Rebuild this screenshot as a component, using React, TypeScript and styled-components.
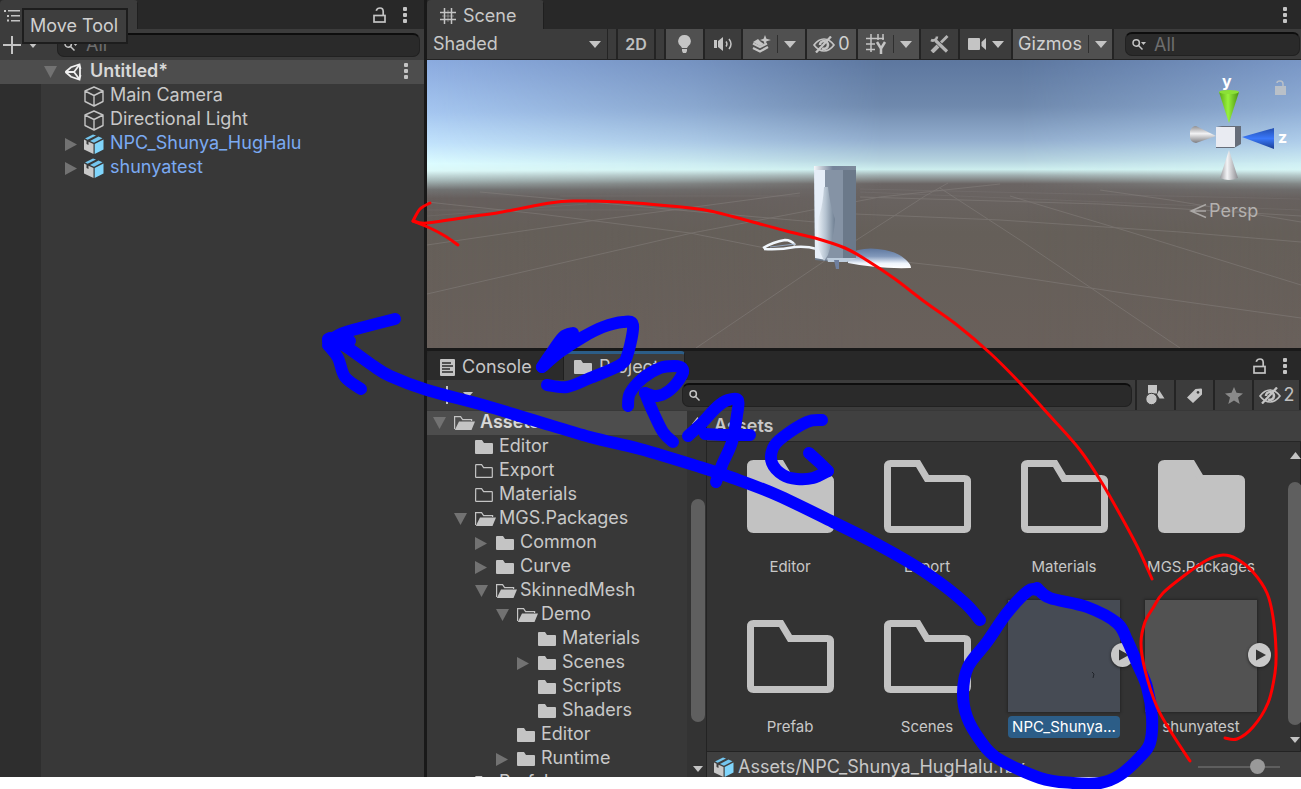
import React from "react";
import styled, { createGlobalStyle, css } from "styled-components";

const GlobalStyle = createGlobalStyle`
  *, *::before, *::after { box-sizing: border-box; }
  html, body { margin: 0; padding: 0; background: #ffffff; }
  body {
    font-family: Inter, "Liberation Sans", sans-serif;
    font-size: 18px;
    line-height: 24px;
    color: #c8c8c8;
    overflow: hidden;
  }
  button, input, select { font: inherit; color: inherit; }
  svg { display: block; flex: none; }
`;

/* ---------- layout ---------- */

const Page = styled.div`
  position: relative;
  height: 100vh;
  padding-bottom: 12px;
`;

const Editor = styled.main`
  height: 100%;
  display: grid;
  grid-template-columns: minmax(0, 424fr) minmax(0, 874fr);
  gap: 3px;
  background: #191919;
`;

const RightSide = styled.div`
  display: grid;
  grid-template-rows: minmax(0, 348fr) minmax(0, 426fr);
  gap: 3px;
  min-height: 0;
`;

const Panel = styled.section`
  display: flex;
  flex-direction: column;
  min-width: 0;
  min-height: 0;
  overflow: hidden;
  background: #383838;
`;

const TabBar = styled.div`
  display: flex;
  flex: none;
  height: 29px;
  background: #282828;
`;

const Tab = styled.button<{ $active?: boolean; $focused?: boolean; $width: number; $pad: number }>`
  display: flex;
  align-items: center;
  gap: 7px;
  width: ${(p) => p.$width}px;
  padding: 0 0 0 ${(p) => p.$pad}px;
  border: 0;
  border-right: 1px solid #1f1f1f;
  border-top: 3px solid ${(p) => (p.$focused ? "#2c5d87" : "transparent")};
  border-radius: 4px 4px 0 0;
  background: ${(p) => (p.$active ? "#3c3c3c" : "#2b2b2b")};
  white-space: nowrap;
`;

const TabTools = styled.div<{ $right: number }>`
  display: flex;
  align-items: center;
  gap: 4px;
  margin-left: auto;
  padding-right: ${(p) => p.$right}px;
`;

const IconButton = styled.button`
  display: grid;
  place-items: center;
  width: 22px;
  height: 22px;
  padding: 0;
  border: 0;
  background: none;
`;

const Toolbar = styled.div`
  display: flex;
  flex: none;
  height: 31px;
  background: #3c3c3c;
  border-bottom: 1px solid #232323;
`;

/* ---------- search ---------- */

const SearchBox = styled.label`
  display: flex;
  align-items: center;
  gap: 8px;
  flex: 1;
  min-width: 0;
  height: 24px;
  padding-left: 6px;
  background: #2a2a2a;
  border: 1px solid #212121;
  border-top: 2px solid #0d0d0d;
  border-radius: 7px;
`;

const SearchInput = styled.input`
  flex: 1;
  min-width: 0;
  padding: 0;
  border: 0;
  outline: 0;
  background: none;
  &::placeholder { color: #6e6e6e; opacity: 1; }
`;

/* ---------- hierarchy ---------- */

const HierarchyTools = styled(Toolbar)`
  align-items: center;
  padding: 0 4px 0 3px;
  border-bottom: 0;
`;

const AddButton = styled.button`
  display: flex;
  align-items: center;
  gap: 7px;
  width: 54px;
  padding: 0;
  border: 0;
  background: none;
`;

const HierarchyBody = styled.div`
  flex: 1;
  background: linear-gradient(to right, #2e2e2e 41px, #383838 41px);
`;

const Row = styled.div<{ $level: number; $start: number; $head?: boolean; $prefab?: boolean }>`
  display: flex;
  align-items: center;
  height: 24px;
  padding-bottom: 2px;
  padding-left: ${(p) => p.$start + p.$level * 21}px;
  padding-right: 7px;
  white-space: nowrap;
  color: ${(p) => (p.$prefab ? "#7baaf2" : "#c8c8c8")};
  ${(p) =>
    p.$head &&
    css`
      background: #4d4d4d;
      font-weight: 600;
      color: #d8d8d8;
    `}
`;

const Twisty = styled.span<{ $gap: number }>`
  display: grid;
  place-items: center;
  flex: none;
  width: 14px;
  height: 22px;
  padding-top: 2px;
  margin-right: ${(p) => p.$gap}px;
`;

const RowIcon = styled.span<{ $width: number }>`
  display: flex;
  flex: none;
  width: ${(p) => p.$width}px;
  padding-top: 2px;
`;

const RowEnd = styled.span`
  margin-left: auto;
`;

const Tooltip = styled.div`
  position: absolute;
  left: 22px;
  top: 8px;
  padding: 4px 8px 4px 6px;
  border: 2px solid #1d1d1d;
  background: #3e3e3e;
  color: #d0d0d0;
  white-space: nowrap;
  z-index: 2;
`;

/* ---------- toolbars ---------- */

const Tool = styled.button<{ $width: number; $on?: boolean }>`
  display: flex;
  align-items: center;
  justify-content: center;
  gap: 3px;
  flex: none;
  width: ${(p) => p.$width}px;
  padding: 0;
  border: 0;
  border-right: 2px solid #242424;
  background: ${(p) => (p.$on ? "#505050" : "#3c3c3c")};
  color: ${(p) => (p.$on ? "#d0d0d0" : "#c0c0c0")};
`;

const ModeTool = styled(Tool)`
  font-size: 16px;
  font-weight: 600;
`;

const Split = styled.span`
  width: 1px;
  height: 18px;
  margin: 0 3px;
  background: #2f2f2f;
`;

const Spacer = styled.span<{ $width: number }>`
  flex: none;
  width: ${(p) => p.$width}px;
  border-right: 2px solid #242424;
`;

const SelectWrap = styled.label`
  display: grid;
  align-items: center;
  flex: none;
  width: 181px;
  padding: 0 6px;
  border-right: 1px solid #242424;
  & > * { grid-area: 1 / 1; }
  & > svg { justify-self: end; pointer-events: none; }
`;

const Select = styled.select`
  appearance: none;
  width: 100%;
  padding: 0;
  border: 0;
  outline: 0;
  background: none;
`;

const SearchSlot = styled.div<{ $left: number; $right: number }>`
  display: flex;
  align-items: center;
  flex: 1;
  min-width: 0;
  padding: 0 ${(p) => p.$right}px 0 ${(p) => p.$left}px;
`;

const Viewport = styled.svg`
  flex: 1 1 0;
  width: 100%;
  min-height: 0;
`;

/* ---------- project ---------- */

const ProjectTools = styled(Toolbar)`
  height: 30px;
  border-bottom: 0;
`;

const ProjectAdd = styled(AddButton)`
  flex: none;
  width: 255px;
  padding-left: 11px;
  gap: 7px;
`;

const ProjectBody = styled.div`
  display: grid;
  grid-template-columns: 260px 20px minmax(0, 1fr);
  flex: 1;
  min-height: 0;
  border-top: 1px solid #383838;
`;

const Tree = styled.div`
  min-height: 0;
  overflow: hidden;
`;

const ScrollTrack = styled.div<{ $rows: string }>`
  display: grid;
  grid-template-rows: ${(p) => p.$rows};
  justify-items: center;
  min-height: 0;
  padding-left: 2px;
  background: #333333;
  border-right: 1px solid #232323;
`;

const ScrollThumb = styled.div`
  grid-row: 3;
  width: 14px;
  border-radius: 7px;
  background: #5f5f5f;
`;

const ScrollStep = styled.button<{ $row: number }>`
  grid-row: ${(p) => p.$row};
  display: grid;
  place-items: center;
  width: 14px;
  padding: 0;
  border: 0;
  background: none;
`;

const Content = styled.div`
  display: flex;
  flex-direction: column;
  min-width: 0;
  min-height: 0;
  background: #333333;
`;

const Crumb = styled.div`
  flex: none;
  height: 31px;
  padding: 3px 7px;
  background: #404040;
  border-bottom: 1px solid #262626;
  font-weight: 600;
`;

const GridArea = styled.div`
  display: grid;
  grid-template-columns: minmax(0, 1fr) 15px;
  flex: 1;
  min-height: 0;
  overflow: hidden;
`;

const Grid = styled.div`
  display: grid;
  grid-template-columns: repeat(auto-fill, 112px);
  align-content: start;
  gap: 22px 25px;
  margin-top: -2px;
  padding-left: 27px;
`;

const Tile = styled.figure`
  display: flex;
  flex-direction: column;
  align-items: center;
  gap: 4px;
  margin: 0;
`;

const Thumb = styled.div<{ $tone?: string }>`
  position: relative;
  display: grid;
  place-items: center;
  width: 112px;
  height: 112px;
  background: ${(p) => p.$tone || "none"};
  box-shadow: ${(p) => (p.$tone ? "0 0 2px 1px #262626" : "none")};
`;

const Play = styled.button`
  position: absolute;
  right: -14px;
  top: 43px;
  width: 23px;
  height: 24px;
  padding: 0;
  border: 0;
  border-radius: 50%;
  background: #c8c8c8;
  box-shadow: 0 1px 3px #202020;
`;

const Caption = styled.figcaption<{ $selected?: boolean }>`
  height: 22px;
  padding: 0 4px;
  border-radius: 4px;
  font-size: 15px;
  line-height: 22px;
  white-space: nowrap;
  background: ${(p) => (p.$selected ? "#2c5d87" : "none")};
  color: ${(p) => (p.$selected ? "#ffffff" : "#c8c8c8")};
`;

const StatusBar = styled.footer`
  display: flex;
  align-items: center;
  gap: 4px;
  flex: none;
  height: 26px;
  padding: 4px 21px 0 7px;
  background: #3f3f3f;
  border-top: 1px solid #232323;
  white-space: nowrap;
`;

const ZoomSlider = styled.input`
  appearance: none;
  width: 82px;
  height: 16px;
  margin: 0 0 0 auto;
  background: linear-gradient(#5e5e5e, #5e5e5e) center / 100% 2px no-repeat;
  &::-webkit-slider-thumb {
    appearance: none;
    width: 15px;
    height: 15px;
    border-radius: 50%;
    background: #999999;
  }
`;

const Ink = styled.svg`
  position: absolute;
  inset: 0;
  width: 100%;
  height: 100%;
  pointer-events: none;
  z-index: 3;
`;

/* ---------- icons ---------- */

const G = "#c4c4c4";

const Down = ({ w = 10, h = 6 }: { w?: number; h?: number }) => (
  <svg width={w} height={h} viewBox="0 0 10 6" preserveAspectRatio="none">
    <path d="M0 0h10L5 6z" fill={G} />
  </svg>
);
const Up = () => (
  <svg width="11" height="7" viewBox="0 0 11 7"><path d="M0 7h11L5.500 0z" fill={G} /></svg>
);
const Expanded = () => (
  <svg width="13" height="12" viewBox="0 0 13 12"><path d="M0 0h13L6.500 12z" fill="#727272" /></svg>
);
const Collapsed = () => (
  <svg width="12" height="13" viewBox="0 0 12 13"><path d="M0 0v13l12-6.500z" fill="#727272" /></svg>
);
const Plus = () => (
  <svg width="18" height="18" viewBox="0 0 18 18"><path d="M9 0v18M0 9h18" stroke={G} strokeWidth="2" /></svg>
);
const Kebab = () => (
  <svg width="4" height="16" viewBox="0 0 4 16" fill={G}>
    <rect width="4" height="4" rx="1" /><rect y="6" width="4" height="4" rx="1" /><rect y="12" width="4" height="4" rx="1" />
  </svg>
);
const Lock = () => (
  <svg width="13" height="16" viewBox="0 0 13 16" fill="none" stroke={G} strokeWidth="1.700">
    <rect x="1" y="8.500" width="11" height="6.500" /><path d="M10.200 8.500V4.500Q10.200 1 7 1 4 1 3.200 3.800" />
  </svg>
);
const ListIcon = () => (
  <svg width="16" height="12" viewBox="0 0 16 12" fill={G}>
    <path d="M0 0h2v2H0zM4 0h12v1.500H4zM3 5h2v2H3zM7 5h9v1.500H7zM3 9.500h2v2H3zM7 10h9v1.500H7z" />
  </svg>
);
const HashIcon = () => (
  <svg width="16" height="16" viewBox="0 0 16 16" stroke={G} strokeWidth="1.500">
    <path d="M4.500 0v16M11.500 0v16M0 4.500h16M0 11.500h16" /><path d="M8 2v12M2 8h12" strokeWidth=".5" />
  </svg>
);
const ConsoleIcon = () => (
  <svg width="15" height="17" viewBox="0 0 15 17">
    <rect width="15" height="17" rx="1" fill={G} />
    <path d="M2 4h9M2 7h11M2 10h8M2 13h11" stroke="#2b2b2b" strokeWidth="1.300" />
  </svg>
);
const Search = ({ menu }: { menu?: boolean }) => (
  <svg width="14" height="11" viewBox="0 0 14 11" fill="none" stroke={G} strokeWidth="1.500">
    <circle cx="4.200" cy="4" r="3.200" /><path d="m6.500 6.500 4 4" />
    {menu && <path d="M9 3h5l-2.500 3z" fill={G} stroke="none" />}
  </svg>
);
const FolderFull = () => (
  <svg width="18" height="14" viewBox="0 0 18 14"><path d="M0 1q0-1 1-1h6l2 3h8q1 0 1 1v9q0 1-1 1H1q-1 0-1-1z" fill={G} /></svg>
);
const FolderEmpty = () => (
  <svg width="18" height="14" viewBox="0 0 18 14"><path d="M.7 1q0-.4.4-.4h5.500l2 3h8q.7 0 .7.600v8.500q0 .7-.6.700H1.200q-.6 0-.6-.6z" fill="none" stroke={G} strokeWidth="1.200" /></svg>
);
const FolderOpen = () => (
  <svg width="21" height="14" viewBox="0 0 21 14">
    <path d="M.6 13V.6h6l2 3h9V5" fill="none" stroke={G} strokeWidth="1.200" />
    <path d="M5 5.500h16L17.500 14H.8z" fill={G} />
  </svg>
);
const CubeIcon = () => (
  <svg width="20" height="21" viewBox="0 0 20 21" fill="none" stroke={G} strokeWidth="1.400" strokeLinejoin="round">
    <path d="M10 1 19 5v10.500L10 20 1 15.500V5zM1 5l9 4.500L19 5M10 9.500V20" />
  </svg>
);
const PrefabIcon = () => (
  <svg width="20" height="20" viewBox="0 0 20 20">
    <path d="M0 5.500 2.500 6.700V10l2 1V7.700L9.500 10v10L0 15.500z" fill="#c8c8c8" />
    <path d="M10.700 10 19.500 5.500v10L10.700 20z" fill="#80d5fb" />
    <path d="M1 4.500 9 .500l3 1L3.700 5.700zM6 7 14.500 2.500l4 1.800L10 8.800z" fill="#74c6ef" />
  </svg>
);
const UnityIcon = () => (
  <svg width="18" height="18" viewBox="0 0 18 18" fill="none" stroke="#f0f0f0" strokeWidth="1.800">
    <path d="M1.500 9 7 4.200 15.500 1.500 16.500 6M16.500 12l-1 4.500L7 13.800 1.500 9" />
    <path d="M1.500 9H10M10 9l5.300-7M10 9l5.300 7M16 4v10" />
  </svg>
);
const BulbIcon = () => (
  <svg width="13" height="18" viewBox="0 0 13 18" fill={G}>
    <path d="M6.500 0a6.200 6.200 0 0 0-3.500 11.400l1 1.600h5l1-1.600A6.200 6.200 0 0 0 6.500 0zM4 14h5v2l-1 2H5l-1-2z" />
  </svg>
);
const SpeakerIcon = () => (
  <svg width="19" height="14" viewBox="0 0 19 14">
    <path d="M0 3h3v8H0zM4 4l5-4v14L4 10z" fill={G} />
    <path d="M12 4.500q1.800 2.500 0 5M15 2q4 5 0 10" fill="none" stroke={G} strokeWidth="1.500" />
  </svg>
);
const FxIcon = () => (
  <svg width="19" height="18" viewBox="0 0 19 18">
    <path d="M1 8.500 8 12l7-3.500M1 13l7 3.500 8-4.500" fill="none" stroke={G} strokeWidth="2.200" />
    <path d="M1 7l5-3 3 3 3 2-4 2z" fill={G} />
    <path d="m13 0 1.400 3.800L19 5l-4.500 1.200L13 10l-1.400-3.800L8 5l3.600-1.200z" fill={G} />
  </svg>
);
const EyeOff = () => (
  <svg width="22" height="17" viewBox="0 0 22 17" fill="none" stroke={G} strokeWidth="1.700">
    <path d="M1 9q4.500-6 10-6t10 6q-4.500 6-10 6T1 9z" />
    <path d="M7 9a4 4 0 0 1 8 0 4 4 0 0 1-6 3.300" strokeWidth="2.600" />
    <path d="M3 16.500 18 .5" strokeWidth="2.300" />
  </svg>
);
const GridYIcon = () => (
  <svg width="21" height="21" viewBox="0 0 21 21" fill="none" stroke={G} strokeWidth="1.500">
    <path d="M5 0v18M12 0v6M17 0v6M0 4.500h18M0 10h9M0 15.500h9" />
    <path d="m11 8 4 6.500L19 8M15 14v6" strokeWidth="2.500" />
  </svg>
);
const ToolsIcon = () => (
  <svg width="19" height="18" viewBox="0 0 19 18" fill="none" stroke="#b4b4b4">
    <path d="M5.500 5.500 17 16.500" strokeWidth="3.200" />
    <path d="M1 5a4 4 0 0 0 6-3.500" strokeWidth="2.600" />
    <path d="M17.500 1 11 7.500" strokeWidth="2.800" /><path d="m8 11-6 6" strokeWidth="4" />
  </svg>
);
const CameraIcon = () => (
  <svg width="18" height="12" viewBox="0 0 18 12" fill={G}><path d="M0 1q0-1 1-1h10q1 0 1 1v10q0 1-1 1H1q-1 0-1-1zM13.500 4 18 0v12l-4.500-4z" /></svg>
);
const ShapesIcon = () => (
  <svg width="19" height="20" viewBox="0 0 19 20" fill={G}>
    <path d="M2 0h9v8.500H2zM13 5l5.500 8.500h-5l-2.500-4z" />
    <circle cx="5.500" cy="14" r="5.700" stroke="#3c3c3c" strokeWidth="1" />
  </svg>
);
const TagIcon = () => (
  <svg width="16" height="15" viewBox="0 0 16 15"><path fillRule="evenodd" d="M0 9.500 8.500 1 14 .5q1 0 1 1v5L6 15zM11 3a1.400 1.400 0 1 0 .01 0z" fill={G} /></svg>
);
const StarIcon = () => (
  <svg width="18" height="17" viewBox="0 0 18 17"><path d="m9 0 2.500 5.800 6.500.6-5 4.200 1.700 6.400L9 13.600 3.300 17 5 10.600 0 6.400l6.500-.6z" fill="#8a8a8a" /></svg>
);
const BigFolder = ({ full }: { full?: boolean }) => (
  <svg width="87" height="73" viewBox="0 0 87 73">
    <path
      d="M3.500 6.500q0-3 3-3h27.500l9 15h37.500q3 0 3 3v45q0 3-3 3h-74q-3 0-3-3z"
      fill={full ? "#c2c2c2" : "none"} stroke="#c2c2c2" strokeWidth="7"
    />
  </svg>
);

/* ---------- data ---------- */

type Node = { name: string; level: number; open?: boolean; icon: "full" | "empty" | "open"; head?: boolean };

const tree: Node[] = [
  { name: "Assets", level: 0, open: true, icon: "open", head: true },
  { name: "Editor", level: 1, icon: "full" },
  { name: "Export", level: 1, icon: "empty" },
  { name: "Materials", level: 1, icon: "empty" },
  { name: "MGS.Packages", level: 1, open: true, icon: "open" },
  { name: "Common", level: 2, open: false, icon: "full" },
  { name: "Curve", level: 2, open: false, icon: "full" },
  { name: "SkinnedMesh", level: 2, open: true, icon: "open" },
  { name: "Demo", level: 3, open: true, icon: "open" },
  { name: "Materials", level: 4, icon: "full" },
  { name: "Scenes", level: 4, open: false, icon: "full" },
  { name: "Scripts", level: 4, icon: "full" },
  { name: "Shaders", level: 4, icon: "full" },
  { name: "Editor", level: 3, icon: "full" },
  { name: "Runtime", level: 3, open: false, icon: "full" },
  { name: "Prefab", level: 1, icon: "empty" },
];

const objects = [
  { name: "Main Camera", prefab: false },
  { name: "Directional Light", prefab: false },
  { name: "NPC_Shunya_HugHalu", prefab: true },
  { name: "shunyatest", prefab: true },
];

const assets: { name: string; full?: boolean; tone?: string; selected?: boolean }[] = [
  { name: "Editor", full: true },
  { name: "Export" },
  { name: "Materials" },
  { name: "MGS.Packages", full: true },
  { name: "Prefab" },
  { name: "Scenes" },
  { name: "NPC_Shunya...", tone: "#464b54", selected: true },
  { name: "shunyatest", tone: "#525252" },
];

const twisty = (open?: boolean) => (open === undefined ? null : open ? <Expanded /> : <Collapsed />);

/* ---------- scene drawing ---------- */

const SceneView = () => (
  <Viewport viewBox="427 60 874 288" preserveAspectRatio="none" role="img" aria-label="Scene view">
    <defs>
      <linearGradient id="skyEdge" x1="0" y1="60" x2="0" y2="348" gradientUnits="userSpaceOnUse">
        <stop offset="0" stopColor="#8babdf" />
        <stop offset=".18" stopColor="#a5c6f0" />
        <stop offset=".29" stopColor="#c2e3fc" />
        <stop offset=".36" stopColor="#dcfcff" />
        <stop offset=".385" stopColor="#dcf8f8" />
        <stop offset=".42" stopColor="#a4b5b5" />
        <stop offset=".45" stopColor="#727373" />
        <stop offset=".48" stopColor="#665f5d" />
        <stop offset=".6" stopColor="#655f59" />
        <stop offset="1" stopColor="#69605b" />
      </linearGradient>
      <linearGradient id="skyMid" x1="0" y1="60" x2="0" y2="348" gradientUnits="userSpaceOnUse">
        <stop offset="0" stopColor="#5d779f" />
        <stop offset=".16" stopColor="#6f89ad" />
        <stop offset=".28" stopColor="#93aece" />
        <stop offset=".35" stopColor="#b5d3df" />
        <stop offset=".38" stopColor="#cdeeee" />
        <stop offset=".4" stopColor="#a0afb0" />
        <stop offset=".43" stopColor="#6a6463" />
        <stop offset=".6" stopColor="#655f59" />
        <stop offset="1" stopColor="#69605b" />
      </linearGradient>
      <linearGradient id="fade">
        <stop offset="0" stopColor="#000" />
        <stop offset=".3" stopColor="#777" />
        <stop offset=".52" stopColor="#fff" />
        <stop offset=".68" stopColor="#fff" />
        <stop offset="1" stopColor="#666" />
      </linearGradient>
      <mask id="midMask"><rect x="427" y="60" width="874" height="288" fill="url(#fade)" /></mask>
      <linearGradient id="cone"><stop offset="0" stopColor="#9a9a9e" /><stop offset=".4" stopColor="#f4f4f6" /><stop offset="1" stopColor="#8d8d92" /></linearGradient>
      <linearGradient id="coneY"><stop offset="0" stopColor="#5aa816" /><stop offset=".45" stopColor="#98f23c" /><stop offset="1" stopColor="#4a9010" /></linearGradient>
      <linearGradient id="coneZ" x2="0" y2="1"><stop offset="0" stopColor="#234fb0" /><stop offset=".5" stopColor="#3a78fa" /><stop offset="1" stopColor="#1b3f92" /></linearGradient>
      <linearGradient id="coneX" x2="0" y2="1"><stop offset="0" stopColor="#8f8f92" /><stop offset=".45" stopColor="#f2f2f4" /><stop offset="1" stopColor="#7c7c80" /></linearGradient>
      <linearGradient id="leaf"><stop offset="0" stopColor="#eef4fa" /><stop offset=".5" stopColor="#b4c2d0" /><stop offset="1" stopColor="#6f7f92" /></linearGradient>
      <linearGradient id="wing" x2="0" y2="1"><stop offset="0" stopColor="#5f78a0" /><stop offset=".4" stopColor="#8299bb" /><stop offset=".75" stopColor="#eef4fc" /><stop offset="1" stopColor="#fff" /></linearGradient>
      <linearGradient id="rim"><stop offset="0" stopColor="#f4f7fa" /><stop offset=".45" stopColor="#74839a" /><stop offset="1" stopColor="#7d8a9b" /></linearGradient>
    </defs>
    <rect x="427" y="60" width="874" height="288" fill="url(#skyEdge)" />
    <rect x="427" y="60" width="874" height="288" fill="url(#skyMid)" mask="url(#midMask)" />

    <g stroke="#8a8582" strokeWidth="1" opacity=".45" fill="none">
      <path d="M427 294 692 233 880 197 1000 184" />
      <path d="M696 348 826 260 855 241 925 196 948 183" />
      <path d="M427 245 597 220 800 193" />
      <path d="M427 202 540 214 690 233 765 248" />
      <path d="M850 256 960 268 1130 294 1301 318" />
      <path d="M855 214 1000 220 1180 232 1301 242" />
      <path d="M1180 348 1020 240 940 188" />
      <path d="M480 192 700 212 815 222M860 197 1100 204 1301 216" />
      <path d="M1301 285 1130 232 1010 196M1301 222 1170 200 1100 190" />
    </g>
    <g stroke="#8a8582" strokeWidth="1" opacity=".22" fill="none">
      <path d="M427 210h260M560 196h240M860 189l440 10M860 192l440 18M427 216l160-12" />
    </g>

    <path d="M848 258q0-4 10-8 12-3 27 0 14 3 20 9 6 5 6 9-34 1-63-5z" fill="url(#wing)" />
    <path d="M763 248q10-6 22-8 6 0 10 5M764 249q16 1 31-2 12-1 22 2" fill="none" stroke="#f0f6fc" strokeWidth="2.500" />
    <path d="M770 247l25-3" stroke="#8fa2bb" strokeWidth="1" />
    <path d="M814 166h42v92l-22 4-19-2z" fill="#6b798a" />
    <path d="M814 166h42v4h-42z" fill="url(#rim)" />
    <path d="M814 170h12v90l-11-2z" fill="#e6eef8" />
    <path d="M825 170h18v91l-18-1z" fill="#8593a5" />
    <path d="M827 258h30l-10 4h-19z" fill="#bccbdb" />
    <path d="M834 260h5v9h-3z" fill="#6f80a0" />
    <path d="M824 187h4q2 18 7 32-1 18-7 36l-4 6-7-16q-1-20 3-32 3-10 4-26z" fill="url(#leaf)" />

    <path d="M1219 92h20l-10 31z" fill="url(#coneY)" />
    <ellipse cx="1229" cy="92" rx="10" ry="2" fill="#8be036" />
    <path d="M1190 131q2-5 6-5l20 10-20 7q-6-1-6-6z" fill="url(#coneX)" />
    <path d="M1274 128v21l-32-12z" fill="url(#coneZ)" />
    <path d="M1229 150l9 28q-9 4-18 0z" fill="url(#cone)" />
    <path d="M1216 127l6-1h19v18l-7 4h-18z" fill="#666d7a" />
    <path d="M1216 127h19v20h-19z" fill="#e9ebf2" />
    <text x="1222" y="87" fill="#fff" fontSize="16" fontWeight="700">y</text>
    <text x="1278" y="143" fill="#fff" fontSize="16" fontWeight="700">z</text>
    <path d="M1275 86h11v9h-11z" fill="#b9c0c8" />
    <path d="M1283 86v-2q0-3-3-3t-3 2" fill="none" stroke="#b9c0c8" strokeWidth="1.500" />
    <path d="M1206 204.500 1191 211l15 6.500M1191 211h15" fill="none" stroke="#aaa7a5" strokeWidth="1.500" />
    <text x="1209" y="217" fill="#b4b1af" fontSize="18">Persp</text>
  </Viewport>
);

/* ---------- pen annotations ---------- */

const BLUE_STROKES = [
  "395 319 360 328 343 333 328 341",
  "328 345 338 358 345 377 361 389",
  "328 339 345 346 372 365 390 376 427 390 483 405 533 420 590 437 640 449 700 467 733 478 777 495 833 522 873 542 917 567 947 588 967 605 980 620",
  "573 333 563 337 550 355 542 367",
  "542 367 560 352 583 337 603 327 623 322 633 325 628 353 620 365 590 378 567 387 547 385",
  "572 334 562 344 552 358",
  "330 338 340 343 350 341",
  "628 406 630 393 643 378 660 368 674 366 682 368 682 375 670 390 657 396 645 393",
  "645 393 653 412 663 432 673 442",
  "688 436 700 425 717 407 728 400 738 400 737 415 732 442 722 465 716 482",
  "705 434 727 435 750 435",
  "822 420 807 422 783 437 773 448 772 463 783 475 797 479 813 478 828 471",
  "828 471 820 463 809 453",
  "1037 588 1050 598 1087 607 1117 623 1127 640 1137 663 1147 687 1152 717 1150 743 1140 757 1120 775 1100 783 1073 783 1040 778 997 758 980 740 967 717 963 693 968 667 987 642 1007 613 1028 591 1037 590",
];

const RED_STROKES = [
  "1152 579 1138 548 1122 518 1102 483 1080 450 1050 416 1020 383 990 353 957 325 925 302 895 279 868 261 845 248 815 238 790 232 760 224 710 211 670 206 620 202 575 201 550 203 497 213 475 216 427 223 414 221",
  "430 203 420 209 413 221",
  "413 221 430 228 445 236 458 245",
  "1225 738 1237 739 1253 727 1268 703 1275 673 1276 650 1273 617 1267 593 1253 572 1237 559 1223 555 1207 560 1185 575 1163 593 1153 608 1145 622 1141 643 1145 670 1157 707 1173 735 1190 761",
];

/* Turns a list of pen points into a curve that passes through all of them. */
function penPath(list: string) {
  const n = list.split(" ").map(Number);
  const pts: number[][] = [];
  for (let i = 0; i < n.length; i += 2) pts.push([n[i], n[i + 1]]);
  const at = (i: number) => pts[Math.max(0, Math.min(pts.length - 1, i))];
  let d = `M${pts[0].join(" ")}`;
  for (let i = 0; i < pts.length - 1; i++) {
    const [a, b, c, e] = [at(i - 1), at(i), at(i + 1), at(i + 2)];
    const p = [b[0] + (c[0] - a[0]) / 6, b[1] + (c[1] - a[1]) / 6];
    const q = [c[0] - (e[0] - b[0]) / 6, c[1] - (e[1] - b[1]) / 6];
    d += `C${p.join(" ")} ${q.join(" ")} ${c.join(" ")}`;
  }
  return d;
}

/* ---------- panels ---------- */

const HierarchyPanel = () => (
  <Panel aria-label="Hierarchy">
    <TabBar>
      <Tab $active $width={138} $pad={4} aria-label="Hierarchy"><ListIcon /></Tab>
      <TabTools $right={8}>
        <IconButton aria-label="Lock hierarchy"><Lock /></IconButton>
        <IconButton aria-label="Hierarchy menu"><Kebab /></IconButton>
      </TabTools>
    </TabBar>
    <HierarchyTools>
      <AddButton aria-label="Create object"><Plus /><Down /></AddButton>
      <SearchBox>
        <Search menu />
        <SearchInput type="text" placeholder="All" aria-label="Search hierarchy" />
      </SearchBox>
    </HierarchyTools>
    <Row $level={0} $start={43} $head>
      <Twisty $gap={7}><Expanded /></Twisty>
      <RowIcon $width={26}><UnityIcon /></RowIcon>
      Untitled*
      <RowEnd><IconButton aria-label="Scene options"><Kebab /></IconButton></RowEnd>
    </Row>
    <HierarchyBody>
      {objects.map((o) => (
        <Row key={o.name} $level={1} $start={43} $prefab={o.prefab}>
          <Twisty $gap={6}>{o.prefab && <Collapsed />}</Twisty>
          <RowIcon $width={26}>{o.prefab ? <PrefabIcon /> : <CubeIcon />}</RowIcon>
          {o.name}
        </Row>
      ))}
    </HierarchyBody>
  </Panel>
);

const ScenePanel = () => (
  <Panel aria-label="Scene">
    <TabBar>
      <Tab $active $width={117} $pad={13}><HashIcon />Scene</Tab>
      <TabTools $right={5}><IconButton aria-label="Scene menu"><Kebab /></IconButton></TabTools>
    </TabBar>
    <Toolbar>
      <SelectWrap>
        <Select aria-label="Shading mode" defaultValue="Shaded"><option>Shaded</option></Select>
        <Down w={12} h={7} />
      </SelectWrap>
      <Spacer $width={10} />
      <ModeTool $width={38}>2D</ModeTool>
      <Spacer $width={10} />
      <Tool $width={39} $on aria-label="Scene lighting"><BulbIcon /></Tool>
      <Tool $width={38} aria-label="Scene audio"><SpeakerIcon /></Tool>
      <Tool $width={64} $on aria-label="Effects"><FxIcon /><Split /><Down w={12} h={7} /></Tool>
      <Tool $width={51} $on aria-label="Hidden objects"><EyeOff />0</Tool>
      <Tool $width={63} $on aria-label="Grid"><GridYIcon /><Split /><Down w={12} h={7} /></Tool>
      <Tool $width={39} aria-label="Component tools"><ToolsIcon /></Tool>
      <Tool $width={53} aria-label="Scene camera"><CameraIcon /><span /><Down w={12} h={7} /></Tool>
      <Tool $width={101} $on>Gizmos<Split /><Down w={12} h={7} /></Tool>
      <SearchSlot $left={11} $right={1}>
        <SearchBox>
          <Search menu />
          <SearchInput type="text" placeholder="All" aria-label="Search scene" />
        </SearchBox>
      </SearchSlot>
    </Toolbar>
    <SceneView />
  </Panel>
);

const ProjectPanel = () => (
  <Panel aria-label="Project">
    <TabBar>
      <Tab $width={137} $pad={13}><ConsoleIcon />Console</Tab>
      <Tab $active $focused $width={121} $pad={10}><FolderFull />Project</Tab>
      <TabTools $right={5}>
        <IconButton aria-label="Lock project"><Lock /></IconButton>
        <IconButton aria-label="Project menu"><Kebab /></IconButton>
      </TabTools>
    </TabBar>
    <ProjectTools>
      <ProjectAdd aria-label="Create asset"><Plus /><Down /></ProjectAdd>
      <SearchSlot $left={0} $right={3}>
        <SearchBox>
          <Search />
          <SearchInput type="text" aria-label="Search project" />
        </SearchBox>
      </SearchSlot>
      <Spacer $width={2} />
      <Tool $width={39} aria-label="Search by type"><ShapesIcon /></Tool>
      <Tool $width={39} aria-label="Search by label"><TagIcon /></Tool>
      <Tool $width={39} aria-label="Favorites"><StarIcon /></Tool>
      <Tool $width={47} aria-label="Hidden packages"><EyeOff />2</Tool>
    </ProjectTools>
    <ProjectBody>
      <Tree>
        {tree.map((n, i) => (
          <Row key={i} $level={n.level} $start={5} $head={n.head}>
            <Twisty $gap={8}>{twisty(n.open)}</Twisty>
            <RowIcon $width={n.head ? 26 : 24}>
              {n.icon === "full" ? <FolderFull /> : n.icon === "empty" ? <FolderEmpty /> : <FolderOpen />}
            </RowIcon>
            {n.name}
          </Row>
        ))}
      </Tree>
      <ScrollTrack $rows="18px 70fr 224fr 39fr 16px">
        <ScrollStep $row={1} aria-label="Scroll tree up"><Up /></ScrollStep>
        <ScrollThumb />
        <ScrollStep $row={5} aria-label="Scroll tree down"><Down /></ScrollStep>
      </ScrollTrack>
      <Content>
        <Crumb>Assets</Crumb>
        <GridArea>
          <Grid>
            {assets.map((a) => (
              <Tile key={a.name}>
                <Thumb $tone={a.tone}>
                  {!a.tone && <BigFolder full={a.full} />}
                  {a.selected && (
                    <svg width="112" height="112" viewBox="0 0 112 112">
                      <path d="M84 72l2 2-1 4" fill="none" stroke="#20242a" />
                    </svg>
                  )}
                  {a.tone && (
                    <Play aria-label={`Expand ${a.name}`}>
                      <svg width="23" height="24" viewBox="0 0 23 24"><path d="M8 6.500v11l10-5.500z" fill="#333" /></svg>
                    </Play>
                  )}
                </Thumb>
                <Caption $selected={a.selected}>{a.name}</Caption>
              </Tile>
            ))}
          </Grid>
          <ScrollTrack $rows="26px 14fr 244fr 4fr 22px">
            <ScrollStep $row={1} aria-label="Scroll assets up"><Up /></ScrollStep>
            <ScrollThumb />
            <ScrollStep $row={5} aria-label="Scroll assets down"><Down /></ScrollStep>
          </ScrollTrack>
        </GridArea>
        <StatusBar>
          <PrefabIcon />
          Assets/NPC_Shunya_HugHalu.fbx
          <ZoomSlider type="range" min={0} max={100} defaultValue={77} aria-label="Icon size" />
        </StatusBar>
      </Content>
    </ProjectBody>
  </Panel>
);

export default function App() {
  return (
    <Page>
      <GlobalStyle />
      <Editor>
        <HierarchyPanel />
        <RightSide>
          <ScenePanel />
          <ProjectPanel />
        </RightSide>
      </Editor>
      <Tooltip role="tooltip">Move Tool</Tooltip>
      <Ink viewBox="0 0 1301 789" preserveAspectRatio="none" fill="none" strokeLinecap="round" strokeLinejoin="round" aria-hidden="true">
        {BLUE_STROKES.map((s) => <path key={s} d={penPath(s)} stroke="#0000ff" strokeWidth="12" />)}
        {RED_STROKES.map((s) => <path key={s} d={penPath(s)} stroke="#ff0000" strokeWidth="3" />)}
      </Ink>
    </Page>
  );
}
